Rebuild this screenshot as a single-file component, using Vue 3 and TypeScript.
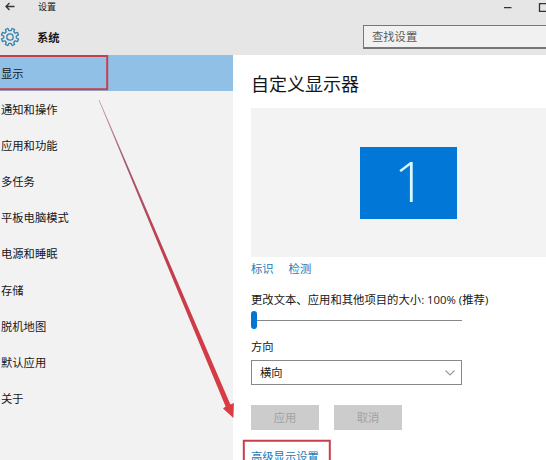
<script setup lang="ts">
import { ref } from 'vue'

const items: string[] = [
  '显示', '通知和操作', '应用和功能', '多任务', '平板电脑模式',
  '电源和睡眠', '存储', '脱机地图', '默认应用', '关于',
]
const active = ref(0)

const teeth = 8
const gearPath: string = (() => {
  const points: string[] = []
  const step = (Math.PI * 2) / teeth
  const polar = (r: number, a: number) =>
    `${(10 + r * Math.cos(a)).toFixed(2)} ${(10 + r * Math.sin(a)).toFixed(2)}`
  for (let i = 0; i < teeth; i++) {
    const a = i * step - Math.PI / 2 + step / 2
    points.push(polar(6.4, a - step * 0.3), polar(8.8, a - step * 0.2))
    points.push(polar(8.8, a + step * 0.2), polar(6.4, a + step * 0.3))
  }
  return `M${points.join('L')}Z`
})()
</script>

<template>
  <div class="window">
    <header class="header">
      <div class="titlebar">
        <svg class="back" width="10" height="9" viewBox="0 0 10 9">
          <path d="M9.5 4.5H1M4.5 1L1 4.5L4.5 8" />
        </svg>
        <span class="app-name">设置</span>
        <svg class="controls" width="42" height="12" viewBox="0 0 42 12">
          <path d="M0 6.7H7.5M35.5 2.7H43.5V10.3H35.5Z" />
        </svg>
      </div>
      <div class="heading">
        <svg class="gear" width="20" height="20" viewBox="0 0 20 20">
          <path :d="gearPath" />
          <circle cx="10" cy="10" r="3.2" />
        </svg>
        <span class="section">系统</span>
        <div class="search">查找设置</div>
      </div>
    </header>
    <div class="body">
      <nav class="sidebar">
        <div
          v-for="(item, i) in items"
          :key="item"
          class="item"
          :class="{ active: i === active }"
          @click="active = i"
        >{{ item }}</div>
      </nav>
      <main class="content">
        <h1 class="title">自定义显示器</h1>
        <div class="preview"><div class="monitor">1</div></div>
        <div class="links"><a>标识</a><a>检测</a></div>
        <div class="label scale">更改文本、应用和其他项目的大小: 100% (推荐)</div>
        <div class="slider"><div class="thumb"></div><div class="track"></div></div>
        <div class="label direction">方向</div>
        <div class="select">
          <span>横向</span>
          <svg width="10" height="6" viewBox="0 0 10 6"><path d="M.5 .5L5 5L9.5 .5" /></svg>
        </div>
        <div class="buttons"><button disabled>应用</button><button disabled>取消</button></div>
        <a class="advanced">高级显示设置</a>
      </main>
    </div>
    <svg class="marks" width="546" height="460" viewBox="0 0 546 460">
      <defs>
        <linearGradient id="shaft" gradientUnits="userSpaceOnUse" x1="99" y1="100" x2="230" y2="410">
          <stop offset="0" stop-color="#c99aa4" />
          <stop offset=".2" stop-color="#a35b6a" />
          <stop offset=".5" stop-color="#c23d4c" />
          <stop offset="1" stop-color="#dc3b42" />
        </linearGradient>
      </defs>
      <path class="frame" d="M-2 56H107.2V89.2H-2" />
      <path class="frame" d="M243.8 470V440.8H329.8V470" />
      <path fill="url(#shaft)" d="M98.6 100L225.6 406.6L223 408.6L233.4 418L233.9 403L230.4 404.6L99.4 100Z" />
    </svg>
  </div>
</template>

<style>
body { overflow: hidden; }
</style>

<style scoped>
.window {
  position: relative;
  width: 546px;
  height: 460px;
  overflow: hidden;
  display: flex;
  flex-direction: column;
  background: #fff;
  color: #161616;
  font: 11.3px/16px "Open Sans", "Noto Sans CJK SC", sans-serif;
}
svg { flex: none; fill: none; }
.header { flex: none; height: 55px; background: #e6e6e6; }
.titlebar { display: flex; align-items: center; height: 13px; padding-left: 5px; }
.back { stroke: #333; stroke-width: 1.3; }
.app-name { margin-left: 23px; font-size: 9px; }
.controls { margin-left: auto; stroke: #333; stroke-width: 1.3; }
.heading { display: flex; align-items: center; height: 24px; margin-top: 12px; }
.gear { stroke: #3482ae; stroke-width: 1.3; stroke-linejoin: round; }
.section { margin-left: 17px; padding-top: 1px; font-weight: 600; }
.search {
  box-sizing: border-box;
  width: 190px;
  height: 24px;
  margin: 0 -7px 0 auto;
  padding-left: 8px;
  border: 1px solid #777;
  border-bottom-width: 2px;
  background: #f1f1f1;
  color: #5c5c5c;
  line-height: 21px;
}
.body { flex: 1; min-height: 0; display: flex; }
.sidebar { flex: none; width: 233px; background: #f2f2f3; }
.item { box-sizing: border-box; height: 36.1px; padding: 1px 0 0 1px; line-height: 36px; }
.active { background: #91c0e7; }
.content { flex: 1; min-width: 0; padding-left: 18px; display: flex; flex-direction: column; }
.title { flex: none; height: 26px; margin: 16px 0 11px; font-size: 18px; line-height: 26px; font-weight: 400; }
.preview {
  flex: none;
  height: 149px;
  padding: 39px 0 0 109px;
  box-sizing: border-box;
  background: #f3f3f3;
}
.monitor {
  box-sizing: border-box;
  width: 97px;
  height: 72px;
  padding-left: 3px;
  background: #0177d7;
  color: #d9fbff;
  font-size: 56px;
  font-weight: 300;
  line-height: 66px;
  text-align: center;
}
.links { display: flex; gap: 15px; margin-top: 4px; height: 16px; }
a { color: #1a78b4; }
.label { flex: none; height: 16px; white-space: nowrap; }
.scale { margin-top: 15px; font-size: 11.35px; }
.slider { display: flex; align-items: center; width: 211px; height: 18px; margin-top: 3px; }
.thumb { width: 6px; height: 18px; border-radius: 3px; background: #0177d2; }
.track { flex: 1; height: 1px; background: #888; }
.direction { margin-top: 10px; }
.select {
  flex: none;
  box-sizing: border-box;
  width: 211px;
  height: 25px;
  margin-top: 5px;
  padding: 0 6px 0 8px;
  border: 1px solid #888;
  display: flex;
  align-items: center;
  justify-content: space-between;
}
.select svg { stroke: #999; stroke-width: 1.1; }
.buttons { flex: none; display: flex; gap: 15px; margin-top: 20px; }
button {
  width: 68px;
  height: 25px;
  padding: 0;
  border: 0;
  background: #ccc;
  color: #a2a2a2;
  font: inherit;
}
.advanced { margin-top: 19px; height: 16px; }
.marks { position: absolute; inset: 0; pointer-events: none; }
.frame { stroke: #c83f4c; stroke-width: 2; }
</style>
